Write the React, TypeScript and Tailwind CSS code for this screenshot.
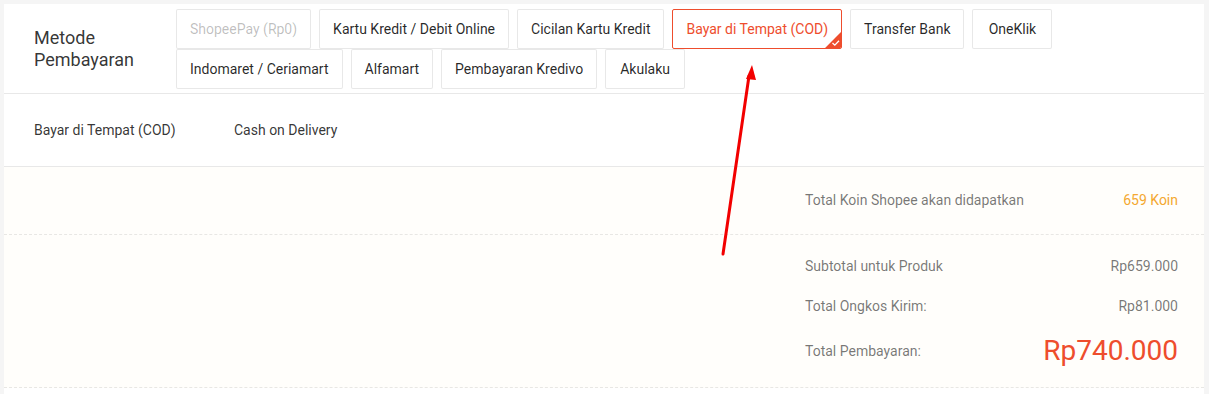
import React from "react";

const row1 = [
  { t: "ShopeePay (Rp0)", disabled: true },
  { t: "Kartu Kredit / Debit Online" },
  { t: "Cicilan Kartu Kredit" },
  { t: "Bayar di Tempat (COD)", selected: true },
  { t: "Transfer Bank" },
  { t: "OneKlik" },
];
const row2 = [
  { t: "Indomaret / Ceriamart" },
  { t: "Alfamart" },
  { t: "Pembayaran Kredivo" },
  { t: "Akulaku" },
];

type B = { t: string; disabled?: boolean; selected?: boolean };

function Btn({ b }: { b: B }) {
  if (b.selected) {
    return (
      <div className="relative h-10 min-w-[80px] px-[13px] flex items-center justify-center border border-[#ee4d2d] rounded-[2px] text-[14px] text-[#ee4d2d] bg-white overflow-hidden">
        {b.t}
        <div className="absolute right-0 bottom-0 w-[16px] h-[16px] bg-[#ee4d2d] [clip-path:polygon(100%_0,100%_100%,0_100%)]">
          <svg viewBox="0 0 16 16" className="absolute inset-0 w-[16px] h-[16px]">
            <path d="M7.5 11 L9.8 13.2 L14 8.8" fill="none" stroke="#fff" strokeWidth="1.3" />
          </svg>
        </div>
      </div>
    );
  }
  return (
    <div
      className={
        "h-10 min-w-[80px] px-[13px] flex items-center justify-center border border-[rgba(0,0,0,0.09)] rounded-[2px] text-[14px] bg-white " +
        (b.disabled ? "text-[rgba(0,0,0,0.26)]" : "text-[rgba(0,0,0,0.85)]")
      }
    >
      {b.t}
    </div>
  );
}

export default function App() {
  return (
    <div
      className="w-[1209px] h-[394px] bg-[#f5f5f5] pt-[4px] pl-[4px] pr-[5px] overflow-hidden relative"
      style={{ fontFamily: "Roboto, 'Liberation Sans', sans-serif" }}
    >
      <div className="bg-white h-[400px]">
        <div className="flex border-b border-[rgba(0,0,0,0.09)] pt-[5px] pb-[4px]">
          <div className="w-[172px] pl-[30px] flex items-center text-[18px] leading-[22px] text-[rgba(0,0,0,0.8)]">
            <div>
              Metode
              <br />
              Pembayaran
            </div>
          </div>
          <div className="flex flex-col">
            <div className="flex gap-x-2">
              {row1.map((b) => (
                <Btn key={b.t} b={b} />
              ))}
            </div>
            <div className="flex gap-x-2">
              {row2.map((b) => (
                <Btn key={b.t} b={b} />
              ))}
            </div>
          </div>
        </div>
        <div className="h-[73px] flex items-center border-b border-[rgba(0,0,0,0.09)] pl-[30px] text-[14px] text-[rgba(0,0,0,0.8)]">
          <div className="w-[200px]">Bayar di Tempat (COD)</div>
          <div>Cash on Delivery</div>
        </div>
        <div className="bg-[#fffefb] text-[14px] text-[rgba(0,0,0,0.54)]">
          <div className="h-[68px] flex justify-end pr-[26px] items-center border-b border-dashed border-[rgba(0,0,0,0.09)]">
            <div className="w-[373px] flex justify-between">
              <span>Total Koin Shopee akan didapatkan</span>
              <span className="text-[#f4a830]">659 Koin</span>
            </div>
          </div>
          <div className="h-[153px] flex flex-col items-end pr-[26px] border-b border-dashed border-[rgba(0,0,0,0.09)]">
            <div className="w-[373px] flex justify-between items-center mt-[21px] h-[20px]">
              <span>Subtotal untuk Produk</span>
              <span>Rp659.000</span>
            </div>
            <div className="w-[373px] flex justify-between items-center mt-[20px] h-[20px]">
              <span>Total Ongkos Kirim:</span>
              <span>Rp81.000</span>
            </div>
            <div className="w-[373px] flex justify-between items-center mt-[15px] h-[40px]">
              <span>Total Pembayaran:</span>
              <span className="text-[28px] text-[#ee4d2d]">Rp740.000</span>
            </div>
          </div>
        </div>
      </div>
      <svg className="absolute left-0 top-0 pointer-events-none" width="1209" height="394">
        <line x1="723" y1="254" x2="749" y2="76" stroke="#f20000" strokeWidth="3" strokeLinecap="round" />
        <polygon points="752,65 756,80 746,79" fill="#f20000" />
      </svg>
    </div>
  );
}
